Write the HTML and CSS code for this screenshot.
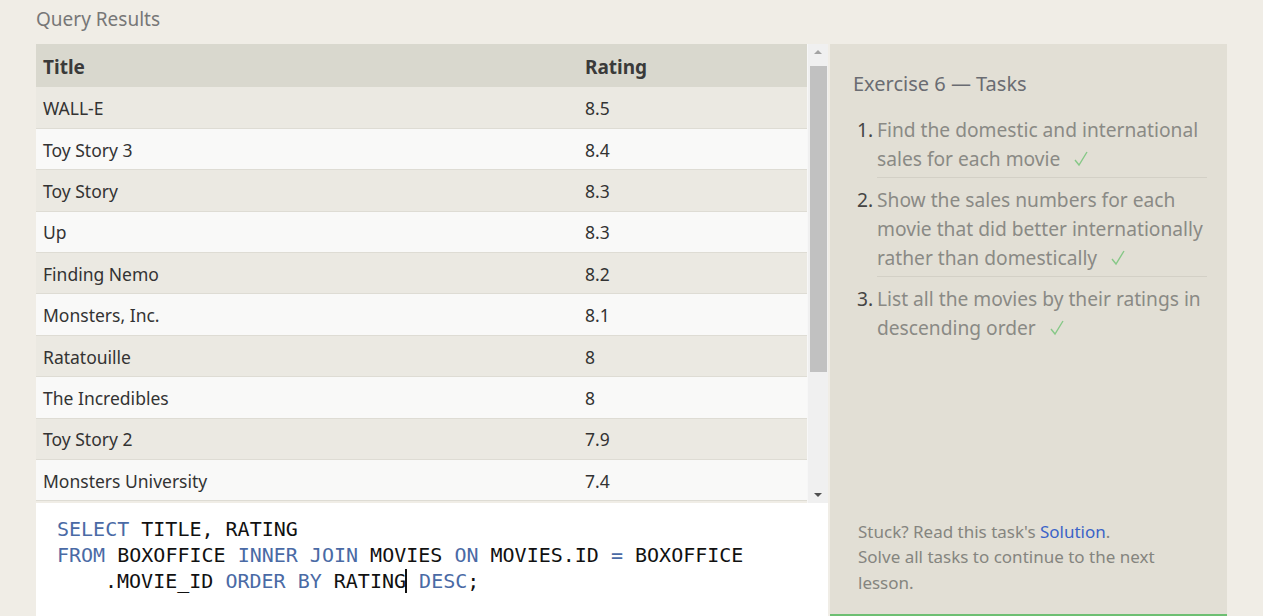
FILE: index.html
```html
<!DOCTYPE html>
<html>
<head>
<meta charset="utf-8">
<link rel="stylesheet" href="styles.css">
</head>
<body>
<div class="page">
  <div class="left">
    <div class="heading">Query Results</div>
    <div class="results">
      <div class="table-area">
        <table class="grid">
          <thead>
            <tr><th class="c1">Title</th><th>Rating</th></tr>
          </thead>
          <tbody>
            <tr><td>WALL-E</td><td>8.5</td></tr>
            <tr><td>Toy Story 3</td><td>8.4</td></tr>
            <tr><td>Toy Story</td><td>8.3</td></tr>
            <tr><td>Up</td><td>8.3</td></tr>
            <tr><td>Finding Nemo</td><td>8.2</td></tr>
            <tr><td>Monsters, Inc.</td><td>8.1</td></tr>
            <tr><td>Ratatouille</td><td>8</td></tr>
            <tr><td>The Incredibles</td><td>8</td></tr>
            <tr><td>Toy Story 2</td><td>7.9</td></tr>
            <tr><td>Monsters University</td><td>7.4</td></tr>
          </tbody>
        </table>
      </div>
      <div class="scrollbar">
        <div class="arrow up"></div>
        <div class="track"><div class="thumb"></div></div>
        <div class="arrow down"></div>
      </div>
    </div>
    <div class="editor">
      <div class="line"><span class="kw">SELECT</span> TITLE, RATING</div>
      <div class="line"><span class="kw">FROM</span> BOXOFFICE <span class="kw">INNER JOIN</span> MOVIES <span class="kw">ON</span> MOVIES.ID <span class="kw">=</span> BOXOFFICE</div>
      <div class="line wrap">.MOVIE_ID <span class="kw">ORDER BY</span> RATING<span class="cursor"></span> <span class="kw">DESC</span>;</div>
    </div>
  </div>
  <div class="tasks">
    <div class="tasks-title">Exercise 6 — Tasks</div>
    <ol class="task-list">
      <li><span class="num">1.</span><span class="txt">Find the domestic and international sales for each movie<svg class="check" viewBox="0 0 14 16" width="14" height="16"><polyline points="1,9 5,14 13,1"/></svg></span></li>
      <li><span class="num">2.</span><span class="txt">Show the sales numbers for each movie that did better internationally rather than domestically<svg class="check" viewBox="0 0 14 16" width="14" height="16"><polyline points="1,9 5,14 13,1"/></svg></span></li>
      <li><span class="num">3.</span><span class="txt">List all the movies by their ratings in descending order<svg class="check" viewBox="0 0 14 16" width="14" height="16"><polyline points="1,9 5,14 13,1"/></svg></span></li>
    </ol>
    <div class="help">
      Stuck? Read this task's <a class="link">Solution</a>.<br>
      Solve all tasks to continue to the next lesson.
    </div>
  </div>
</div>
</body>
</html>
```

FILE: styles.css
```css
html, body {
  margin: 0;
  padding: 0;
  background: #f0ede6;
  height: 616px;
  overflow: hidden;
}
body {
  font-family: "Noto Sans", "Open Sans", sans-serif;
}
.page {
  display: flex;
  padding-left: 36px;
  gap: 2px;
  height: 616px;
}
.left {
  width: 792px;
  display: flex;
  flex-direction: column;
}
.heading {
  height: 44px;
  box-sizing: border-box;
  padding-top: 5px;
  font-size: 19px;
  line-height: 28px;
  color: #777;
}
.results {
  height: 459px;
  display: flex;
  overflow: hidden;
}
.table-area {
  width: 771px;
  overflow: hidden;
}
.grid {
  width: 100%;
  border-collapse: collapse;
  font-size: 17.5px;
  color: #333;
}
.grid th {
  text-align: left;
  background: #d9d8ce;
  height: 43px;
  padding: 2px 7px 0;
  font-size: 19px;
  font-weight: bold;
  color: #3a3a3a;
  box-sizing: border-box;
}
.grid th.c1 { width: 542px; }
.grid td {
  height: 41.4px;
  padding: 1px 7px 0;
  box-sizing: border-box;
  border-bottom: 1px solid #dedcd4;
}
.grid tbody tr:nth-child(odd) td { background: #ebe9e2; }
.grid tbody tr:nth-child(even) td { background: #f9f9f8; }
.scrollbar {
  width: 21px;
  background: #f0f0f0;
  display: flex;
  flex-direction: column;
  align-items: center;
  border-left: 1px solid #f7f7f7;
  box-sizing: border-box;
}
.arrow {
  height: 17px;
  width: 17px;
  position: relative;
}
.arrow.up::after, .arrow.down::after {
  content: "";
  position: absolute;
  left: 4px;
  border-left: 4px solid transparent;
  border-right: 4px solid transparent;
}
.arrow.up::after {
  top: 6px;
  border-bottom: 4px solid #a3a3a3;
}
.arrow.down::after {
  top: 7px;
  border-top: 4px solid #505050;
}
.track {
  flex: 1;
  width: 17px;
}
.thumb {
  margin-top: 5px;
  height: 306px;
  background: #c1c1c1;
}
.editor {
  flex: 1;
  background: #ffffff;
  padding: 13px 0 0 21px;
  font-family: "DejaVu Sans Mono", monospace;
  font-size: 20px;
  line-height: 26px;
  color: #111;
}
.line { white-space: pre; }
.line.wrap { padding-left: 48px; }
.kw { color: #4a6aa5; }
.cursor {
  display: inline-block;
  width: 2px;
  height: 24px;
  background: #111;
  vertical-align: -5px;
  margin-left: -1px;
}
.tasks {
  width: 397px;
  margin-top: 44px;
  background: #e2dfd5;
  border-bottom: 2px solid #6dbf72;
  box-sizing: border-box;
  display: flex;
  flex-direction: column;
  padding: 24px 20px 19px 23px;
}
.tasks-title {
  font-size: 20px;
  line-height: 32px;
  color: #6a6c72;
}
.task-list {
  list-style: none;
  margin: 15px 0 0 4px;
  padding: 0;
}
.task-list li {
  display: flex;
  font-size: 19.2px;
  line-height: 29px;
  color: #8a8a85;
}
.task-list .num {
  width: 20px;
  color: #444;
  flex: none;
}
.task-list .txt {
  flex: 1;
  padding-bottom: 4px;
  margin-bottom: 7px;
  border-bottom: 1px solid #d3d0c6;
}
.task-list li:last-child .txt { border-bottom: none; }
.check {
  margin-left: 14px;
  vertical-align: -1px;
  fill: none;
  stroke: #86c887;
  stroke-width: 1.4;
}
.help {
  margin-top: auto;
  padding-left: 5px;
  width: 320px;
  font-size: 17px;
  line-height: 25.5px;
  color: #85857f;
}
.link { color: #3b64c8; }
```
